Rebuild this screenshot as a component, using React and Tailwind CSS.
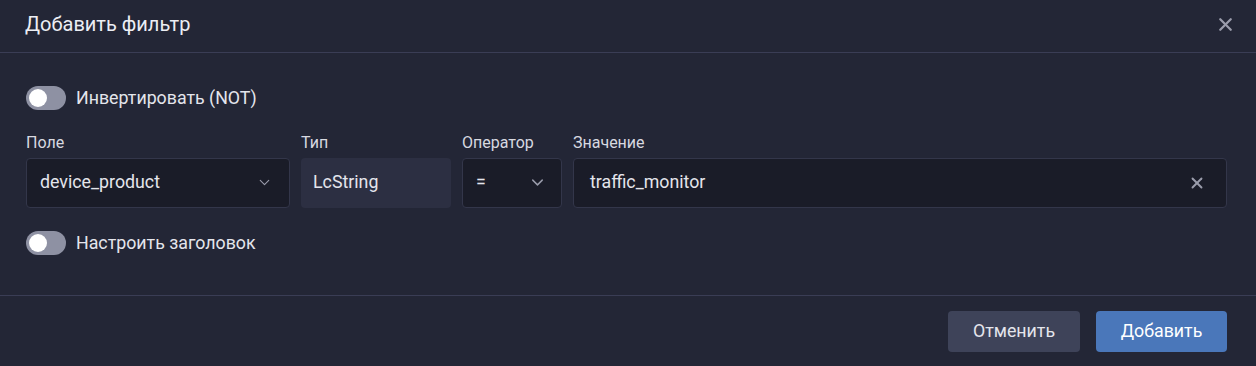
import { X, ChevronDown } from "lucide-react";

const Toggle = ({ label }) => (
  <div className="flex items-center gap-[10px]">
    <div className="w-[40px] h-[24px] rounded-full bg-[#8e91a3] p-[3px] flex items-center">
      <div className="w-[18px] h-[18px] rounded-full bg-white" />
    </div>
    <span className="text-[17.8px] text-[#e4e5ec]">{label}</span>
  </div>
);

export default function App() {
  return (
    <div className="w-[1256px] h-[366px] bg-[#232636] text-[#e4e5ec] flex flex-col" style={{ fontFamily: "Roboto, 'Noto Sans', sans-serif" }}>
      <div className="h-[53px] flex items-center justify-between pl-[25px] pr-[20px] border-b border-[#3a3d55]">
        <span className="text-[20px] text-[#eceef4] -mt-[4px]">Добавить фильтр</span>
        <X size={21} strokeWidth={2.6} className="text-[#9a9cab] -mt-[3px]" />
      </div>

      <div className="flex-1 pl-[26px] pr-[29px] pt-[32px] border-b border-[#3a3d55]">
        <Toggle label="Инвертировать (NOT)" />

        <div className="flex gap-[11px] mt-[20px] text-[16px]">
          <div className="w-[264px] flex flex-col">
            <span className="h-[22px] leading-[22px] text-[#d8d9e0]">Поле</span>
            <div className="mt-[4px] h-[50px] rounded-[4px] border border-[#33364a] bg-[#1a1c28] flex items-center justify-between pl-[13px] pr-[16px]">
              <span className="text-[17.8px] text-[#e4e5ec]">device_product</span>
              <ChevronDown size={17} strokeWidth={1.6} className="text-[#9a9cab]" />
            </div>
          </div>
          <div className="w-[150px] flex flex-col">
            <span className="h-[22px] leading-[22px] text-[#d8d9e0]">Тип</span>
            <div className="mt-[4px] h-[50px] rounded-[4px] bg-[#2c2f42] flex items-center pl-[12px]">
              <span className="text-[17.8px] text-[#e4e5ec]">LcString</span>
            </div>
          </div>
          <div className="w-[100px] flex flex-col">
            <span className="h-[22px] leading-[22px] text-[#d8d9e0]">Оператор</span>
            <div className="mt-[4px] h-[50px] rounded-[4px] border border-[#33364a] bg-[#1a1c28] flex items-center justify-between pl-[13px] pr-[14px]">
              <span className="text-[17.8px] text-[#e4e5ec]">=</span>
              <ChevronDown size={19} strokeWidth={1.8} className="text-[#9a9cab]" />
            </div>
          </div>
          <div className="flex-1 flex flex-col">
            <span className="h-[22px] leading-[22px] text-[#d8d9e0]">Значение</span>
            <div className="mt-[4px] h-[50px] rounded-[4px] border border-[#33364a] bg-[#1a1c28] flex items-center justify-between pl-[16px] pr-[20px]">
              <span className="text-[17.8px] text-[#e4e5ec]">traffic_monitor</span>
              <X size={18} strokeWidth={2.5} className="text-[#9a9cab]" />
            </div>
          </div>
        </div>

        <div className="mt-[22px]">
          <Toggle label="Настроить заголовок" />
        </div>
      </div>

      <div className="h-[70px] flex items-center justify-end gap-[16px] px-[29px]">
        <button className="w-[132px] h-[41px] rounded-[4px] bg-[#3e4359] text-[17.8px] text-[#e4e5ec]">Отменить</button>
        <button className="w-[131px] h-[41px] rounded-[4px] bg-[#4a77ba] text-[17.8px] text-white">Добавить</button>
      </div>
    </div>
  );
}
